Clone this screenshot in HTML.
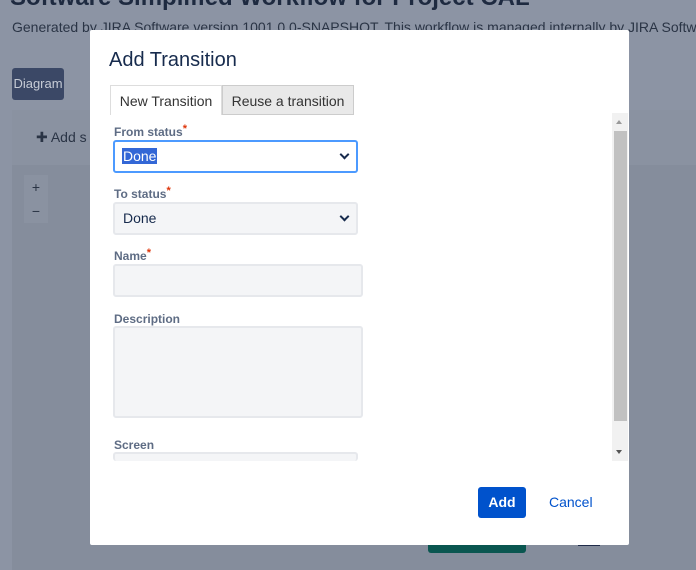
<!DOCTYPE html>
<html><head><style>
*{box-sizing:border-box;margin:0;padding:0}
body{width:696px;height:569px;overflow:hidden;background:#8c94a4;font-family:"Liberation Sans",sans-serif;position:relative}
.a{position:absolute}
.lbl{position:absolute;left:114px;font-size:12px;font-weight:bold;color:#5e6c84}
.lbl i{color:#de350b;font-style:normal;font-size:11px;position:relative;top:-4px}
.fld{position:absolute;left:113px;width:250px;background:#f4f5f7;border:2px solid #e6e8ec;border-radius:3px}
.sel{font-size:14px;color:#172b4d;padding:6px 8px}
.chev{position:absolute;right:8px;top:9px;width:7px;height:7px;border-right:2px solid #172b4d;border-bottom:2px solid #172b4d;transform:rotate(45deg)}
</style></head><body>
<div class="a" style="left:10px;top:-16px;font-size:24px;color:#1e2a40;font-weight:bold">Software Simplified Workflow for Project CAL</div>
<div class="a" style="left:12px;top:19px;font-size:14px;color:#2a3445;white-space:nowrap">Generated by JIRA Software version 1001.0.0-SNAPSHOT. This workflow is managed internally by JIRA Software</div>
<div class="a" style="left:12px;top:68px;width:52px;height:32px;background:#3b4866;border-radius:3px;color:#c7ccd6;font-size:13px;line-height:32px;text-align:center">Diagram</div>
<div class="a" style="left:12px;top:110px;width:690px;height:460px;background:#858d9c"></div>
<div class="a" style="left:12px;top:110px;width:690px;height:55px;background:#8a92a1"></div>
<div class="a" style="left:36px;top:129px;font-size:14px;color:#2a3445">✚ Add s</div>
<div class="a" style="left:24px;top:175px;width:24px;height:48px;background:#8a92a1;color:#2a3445;font-size:14px;text-align:center;line-height:24px">+<br>−</div>
<div class="a" style="left:428px;top:535px;width:98px;height:18px;background:#0a5650;border-radius:3px"></div>
<div class="a" style="left:578px;top:538px;width:22px;height:8px;background:#1f2c4a"></div>
<div class="a" style="left:90px;top:30px;width:539px;height:515px;background:#fff;border-radius:2px"></div>
<div class="a" style="left:109px;top:49px;font-size:20px;color:#172b4d">Add Transition</div>
<div class="a" style="left:110px;top:85px;height:30px;border:1px solid #ddd;border-bottom:none;width:112px;background:#fff;font-size:14px;color:#333;text-align:center;line-height:30px">New Transition</div>
<div class="a" style="left:222px;top:85px;width:132px;height:30px;border:1px solid #ccc;background:#e9e9e9;font-size:14px;color:#333;text-align:center;line-height:30px">Reuse a transition</div>
<div class="lbl" style="top:125px">From status<i>*</i></div>
<div class="a" style="left:113px;top:140px;width:245px;height:33px;border:2px solid #4c9aff;border-radius:3px;background:#fff"><span style="position:absolute;left:7px;top:6px;font-size:14px;background:#3367d6;color:#fff;padding:0 1px">Done</span><div class="chev"></div></div>
<div class="lbl" style="top:187px">To status<i>*</i></div>
<div class="fld sel" style="top:202px;width:245px;height:33px">Done<div class="chev"></div></div>
<div class="lbl" style="top:249px">Name<i>*</i></div>
<div class="fld" style="top:264px;height:33px"></div>
<div class="lbl" style="top:312px">Description</div>
<div class="fld" style="top:326px;height:92px"></div>
<div class="lbl" style="top:438px">Screen</div>
<div class="fld" style="top:452px;width:245px;height:9px;border-bottom:none"></div>
<div class="a" style="left:612px;top:113px;width:16px;height:348px;background:#f1f1f1"></div>
<div class="a" style="left:614px;top:131px;width:13px;height:290px;background:#c1c1c1"></div>
<div class="a" style="left:616px;top:120px;border:3px solid transparent;border-bottom:4px solid #999;border-top:none"></div>
<div class="a" style="left:616px;top:450px;border:3px solid transparent;border-top:4px solid #555;border-bottom:none"></div>
<div class="a" style="left:478px;top:487px;width:48px;height:31px;background:#0052cc;border-radius:3px;color:#fff;font-weight:bold;font-size:14px;text-align:center;line-height:31px">Add</div>
<div class="a" style="left:549px;top:494px;font-size:14px;color:#0052cc">Cancel</div>
</body></html>
